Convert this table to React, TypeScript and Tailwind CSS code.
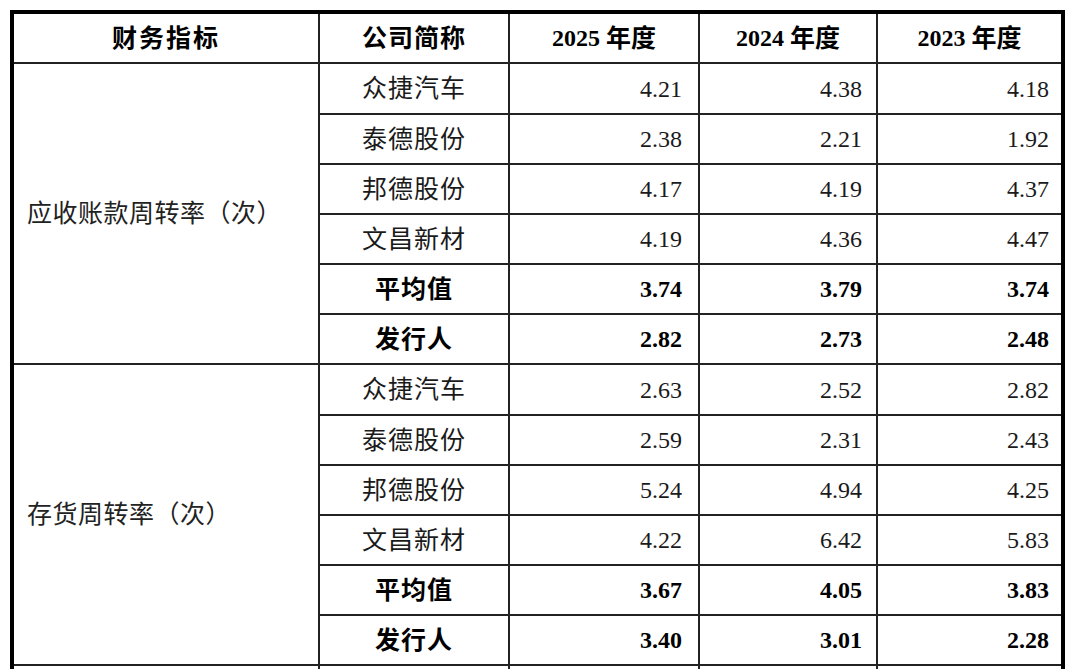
import React from "react";

type Row = { name: string; v: [string, string, string]; bold?: boolean };
type Group = { label: string; rows: Row[] };

const groups: Group[] = [
  {
    label: "应收账款周转率（次）",
    rows: [
      { name: "众捷汽车", v: ["4.21", "4.38", "4.18"] },
      { name: "泰德股份", v: ["2.38", "2.21", "1.92"] },
      { name: "邦德股份", v: ["4.17", "4.19", "4.37"] },
      { name: "文昌新材", v: ["4.19", "4.36", "4.47"] },
      { name: "平均值", v: ["3.74", "3.79", "3.74"], bold: true },
      { name: "发行人", v: ["2.82", "2.73", "2.48"], bold: true },
    ],
  },
  {
    label: "存货周转率（次）",
    rows: [
      { name: "众捷汽车", v: ["2.63", "2.52", "2.82"] },
      { name: "泰德股份", v: ["2.59", "2.31", "2.43"] },
      { name: "邦德股份", v: ["5.24", "4.94", "4.25"] },
      { name: "文昌新材", v: ["4.22", "6.42", "5.83"] },
      { name: "平均值", v: ["3.67", "4.05", "3.83"], bold: true },
      { name: "发行人", v: ["3.40", "3.01", "2.28"], bold: true },
    ],
  },
  {
    label: "",
    rows: [
      { name: "", v: ["", "", ""] },
      { name: "", v: ["", "", ""] },
    ],
  },
];

function GroupBlock({ g }: { g: Group }) {
  return (
    <div className="flex">
      <div className="flex w-[306px] shrink-0 items-center border-r-2 border-b-2 border-[#222] pl-[13px] text-[25px] tracking-[0.5px] text-[#222] leading-none">
        {g.label}
      </div>
      <div className="flex flex-1 flex-col">
        {g.rows.map((r, i) => (
          <div
            key={i}
            className={`flex border-b-2 border-[#222] leading-none ${i === 0 ? "h-[51px]" : "h-[50px]"} ${r.bold ? "font-bold text-black" : "text-[#1a1a1a]"}`}
          >
            <div className="flex w-[190px] shrink-0 items-center justify-center border-r-2 border-[#222] text-[25px] tracking-[1px]">
              {r.name}
            </div>
            <div className="flex w-[190px] shrink-0 items-center justify-end border-r-2 border-[#222] pr-[16px]">
              {r.v[0]}
            </div>
            <div className="flex w-[178px] shrink-0 items-center justify-end border-r-2 border-[#222] pr-[14px]">
              {r.v[1]}
            </div>
            <div className="flex flex-1 items-center justify-end pr-[12px]">{r.v[2]}</div>
          </div>
        ))}
      </div>
    </div>
  );
}

function Year({ y }: { y: string }) {
  return (
    <>
      <span>{y}</span>
      <span className="ml-[6px] text-[25px]">年度</span>
    </>
  );
}

export default function App() {
  return (
    <div className="h-[669px] w-[1080px] overflow-hidden bg-white pl-[10px] pt-[10px]">
      <div className="w-[1055px] border-x-4 border-t-4 border-black font-['Liberation_Serif','Noto_Sans_CJK_SC',serif] text-[24px]">
        <div className="flex h-[50px] border-b-2 border-[#222] font-bold leading-none text-black">
          <div className="flex w-[306px] shrink-0 items-center justify-center border-r-2 border-[#222] text-[25px] tracking-[2px]">财务指标</div>
          <div className="flex w-[190px] shrink-0 items-center justify-center border-r-2 border-[#222] text-[25px] tracking-[1px]">公司简称</div>
          <div className="flex w-[190px] shrink-0 items-center justify-center border-r-2 border-[#222]"><Year y="2025" /></div>
          <div className="flex w-[178px] shrink-0 items-center justify-center border-r-2 border-[#222]"><Year y="2024" /></div>
          <div className="flex flex-1 items-center justify-center"><Year y="2023" /></div>
        </div>
        {groups.map((g, i) => (
          <GroupBlock key={i} g={g} />
        ))}
      </div>
    </div>
  );
}
